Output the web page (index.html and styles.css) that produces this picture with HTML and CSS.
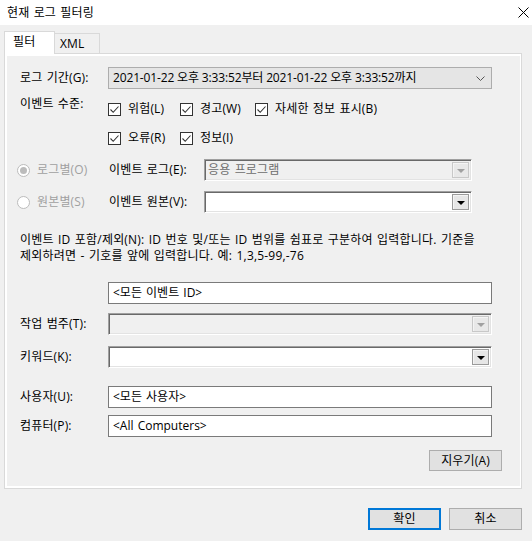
FILE: index.html
```html
<!DOCTYPE html>
<html lang="ko">
<head>
<meta charset="utf-8">
<link rel="stylesheet" href="styles.css">
</head>
<body>
<div class="titlebar">
  <span class="title">현재 로그 필터링</span>
  <svg class="close" width="11" height="11" viewBox="0 0 11 11"><path d="M0.5 0.5 L10.5 10.5 M10.5 0.5 L0.5 10.5" stroke="#000" stroke-width="1" fill="none"/></svg>
</div>
<div class="tabs">
  <div class="tab active">필터</div>
  <div class="tab">XML</div>
</div>
<div class="tabctl">
  <div class="page">
    <div class="row row-period">
      <div class="lbl">로그 기간(G):</div>
      <div class="combo-modern">
        <span class="date">2021-01-22 오후 3:33:52부터 2021-01-22 오후 3:33:52까지</span>
        <svg class="chev" width="9" height="5" viewBox="0 0 9 5"><path d="M0.5 0.5 L4.5 4.5 L8.5 0.5" stroke="#555" fill="none"/></svg>
      </div>
    </div>

    <div class="levels">
      <div class="lbl lbl-levels">이벤트 수준:</div>
      <div class="checks">
        <div class="checkrow">
          <label class="cb w1"><span class="box"><svg width="11" height="11" viewBox="0 0 11 11"><path d="M1.5 5.5 L4.2 8.3 L9.5 2.5" stroke="#333" stroke-width="1.1" fill="none"/></svg></span>위험(L)</label>
          <label class="cb w2"><span class="box"><svg width="11" height="11" viewBox="0 0 11 11"><path d="M1.5 5.5 L4.2 8.3 L9.5 2.5" stroke="#333" stroke-width="1.1" fill="none"/></svg></span>경고(W)</label>
          <label class="cb"><span class="box"><svg width="11" height="11" viewBox="0 0 11 11"><path d="M1.5 5.5 L4.2 8.3 L9.5 2.5" stroke="#333" stroke-width="1.1" fill="none"/></svg></span>자세한 정보 표시(B)</label>
        </div>
        <div class="checkrow second">
          <label class="cb w1"><span class="box"><svg width="11" height="11" viewBox="0 0 11 11"><path d="M1.5 5.5 L4.2 8.3 L9.5 2.5" stroke="#333" stroke-width="1.1" fill="none"/></svg></span>오류(R)</label>
          <label class="cb w2"><span class="box"><svg width="11" height="11" viewBox="0 0 11 11"><path d="M1.5 5.5 L4.2 8.3 L9.5 2.5" stroke="#333" stroke-width="1.1" fill="none"/></svg></span>정보(I)</label>
        </div>
      </div>
    </div>

    <div class="row row-radio1">
      <div class="radio-item"><span class="radio checked"></span><span class="dis">로그별(O)</span></div>
      <div class="lbl2">이벤트 로그(E):</div>
      <div class="combo3d short disabled">
        <span class="val">응용 프로그램</span>
        <span class="dbtn"><span class="tri"></span></span>
      </div>
    </div>

    <div class="row row-radio2">
      <div class="radio-item"><span class="radio"></span><span class="dis">원본별(S)</span></div>
      <div class="lbl2">이벤트 원본(V):</div>
      <div class="combo3d short">
        <span class="val"></span>
        <span class="dbtn"><span class="tri"></span></span>
      </div>
    </div>

    <p class="desc">이벤트 ID 포함/제외(N): ID 번호 및/또는 ID 범위를 쉼표로 구분하여 입력합니다. 기준을<br>제외하려면 - 기호를 앞에 입력합니다. 예: 1,3,5-99,-76</p>

    <div class="row row-id">
      <div class="lbl"></div>
      <div class="input">&lt;모든 이벤트 ID&gt;</div>
    </div>

    <div class="row row-task">
      <div class="lbl">작업 범주(T):</div>
      <div class="combo3d wide disabled">
        <span class="val"></span>
        <span class="dbtn"><span class="tri"></span></span>
      </div>
    </div>

    <div class="row row-kw">
      <div class="lbl">키워드(K):</div>
      <div class="combo3d wide">
        <span class="val"></span>
        <span class="dbtn"><span class="tri"></span></span>
      </div>
    </div>

    <div class="row row-user">
      <div class="lbl">사용자(U):</div>
      <div class="input">&lt;모든 사용자&gt;</div>
    </div>

    <div class="row row-comp">
      <div class="lbl">컴퓨터(P):</div>
      <div class="input">&lt;All Computers&gt;</div>
    </div>

    <div class="clear-row">
      <button class="btn">지우기(A)</button>
    </div>
  </div>
</div>
<div class="footer">
  <button class="btn primary">확인</button>
  <button class="btn">취소</button>
</div>
</body>
</html>
```

FILE: styles.css
```css
* { box-sizing: border-box; }
html, body { margin: 0; padding: 0; }
body {
  width: 532px;
  height: 541px;
  background: #f0f0f0;
  font-family: "Open Sans", "Noto Sans CJK KR", sans-serif;
  font-size: 12px;
  letter-spacing: 0.15px;
  word-spacing: 1px;
  color: #000;
  overflow: hidden;
}
.titlebar {
  height: 25px;
  background: #fff;
  display: flex;
  align-items: center;
  justify-content: space-between;
  padding: 0 3px 0 7px;
}
.title { font-size: 12px; line-height: 16px; }
.close { display: block; }

.tabs {
  margin-top: 6px;
  padding-left: 4px;
  display: flex;
  align-items: flex-end;
  height: 22px;
  position: relative;
  z-index: 1;
}
.tab {
  height: 20px;
  width: 45px;
  border: 1px solid #d9d9d9;
  border-bottom: none;
  border-left: none;
  background: #f0f0f0;
  padding-left: 5px;
  line-height: 19px;
}
.tab.active {
  width: 51px;
  height: 23px;
  margin-bottom: -1px;
  background: #fff;
  border-left: 1px solid #d9d9d9;
  padding-left: 8px;
  line-height: 20px;
}
.tabctl {
  margin-left: 4px;
  width: 518px;
  height: 436px;
  border: 1px solid #d9d9d9;
  background: #fff;
  padding: 2px 1px 2px 2px;
}
.page {
  background: #f0f0f0;
  height: 100%;
  padding: 11px 0 0 10px;
}
.row {
  display: flex;
  align-items: center;
  height: 22px;
}
.lbl {
  width: 91px;
  padding-left: 3px;
  flex: none;
  line-height: 16px;
}
.combo-modern {
  width: 384px;
  height: 22px;
  border: 1px solid #adadad;
  background: #e5e5e5;
  display: flex;
  align-items: center;
  justify-content: space-between;
  padding: 0 6px 0 4px;
  line-height: 16px;
}
.date { letter-spacing: -0.15px; word-spacing: 0; }
.chev { display: block; }

.levels {
  margin-top: 7px;
  display: flex;
}
.lbl-levels { height: 16px; }
.checks { padding-top: 5px; }
.checkrow { display: flex; height: 16px; align-items: center; }
.checkrow.second { margin-top: 13px; }
.cb {
  display: flex;
  align-items: center;
  line-height: 16px;
}
.cb.w1 { width: 72px; }
.cb.w2 { width: 75px; }
.box {
  width: 13px;
  height: 13px;
  border: 1px solid #333;
  background: #fff;
  margin-right: 7px;
  display: flex;
  align-items: center;
  justify-content: center;
  flex: none;
}
.box svg { display: block; }

.row-radio1 { margin-top: 13px; }
.row-radio2 { margin-top: 10px; }
.radio-item {
  width: 92px;
  display: flex;
  align-items: center;
  flex: none;
}
.radio {
  width: 13px;
  height: 13px;
  border-radius: 50%;
  border: 1px solid #bcbcbc;
  background: #fff;
  margin-right: 7px;
  display: flex;
  align-items: center;
  justify-content: center;
  flex: none;
}
.radio.checked::after {
  content: "";
  width: 7px;
  height: 7px;
  border-radius: 50%;
  background: #bcbcbc;
}
.dis { color: #a0a0a0; line-height: 16px; }
.lbl2 { width: 95px; flex: none; line-height: 16px; }

.combo3d {
  height: 22px;
  display: flex;
  align-items: center;
  justify-content: space-between;
  border: 1px solid;
  border-color: #a0a0a0 #fff #fff #a0a0a0;
  box-shadow: inset 1px 1px 0 #696969, inset -1px -1px 0 #e3e3e3;
  background: #fff;
  padding: 2px;
}
.combo3d.short { width: 268px; }
.combo3d.wide { width: 384px; }
.combo3d.disabled { background: #f0f0f0; }
.combo3d .val { padding-left: 1px; color: #6d6d6d; line-height: 16px; }
.dbtn {
  width: 17px;
  height: 16px;
  border: 1px solid #9a9a9a;
  background: #e6e6e6;
  display: flex;
  align-items: center;
  justify-content: center;
  box-shadow: inset 1px 1px 0 #f4f4f4;
}
.tri {
  width: 0;
  height: 0;
  border-left: 4px solid transparent;
  border-right: 4px solid transparent;
  border-top: 4px solid #000;
  margin-top: 2px;
}
.disabled .dbtn { border-color: #c8c8c8; background: #e8e8e8; }
.disabled .tri { border-top-color: #a0a0a0; }

.desc {
  margin: 19px 0 0 3px;
  line-height: 16px;
  letter-spacing: 0.2px;
  white-space: nowrap;
}
.input {
  width: 384px;
  height: 22px;
  border: 1px solid #7a7a7a;
  background: #fff;
  padding: 0 4px;
  line-height: 20px;
  letter-spacing: 0;
}
.row-id { margin-top: 18px; }
.row-task { margin-top: 9px; }
.row-kw { margin-top: 11px; }
.row-user { margin-top: 18px; }
.row-comp { margin-top: 7px; }

.clear-row {
  margin-top: 13px;
  display: flex;
  justify-content: flex-end;
  padding-right: 18px;
}
.btn {
  width: 73px;
  height: 21px;
  border: 1px solid #adadad;
  background: #e1e1e1;
  font-family: inherit;
  font-size: 12px;
  letter-spacing: inherit;
  padding: 0;
  color: #000;
  line-height: 16px;
}
.footer {
  margin-top: 19px;
  display: flex;
  justify-content: flex-end;
  gap: 8px;
  padding-right: 10px;
}
.footer .btn { height: 22px; }
.btn.primary { border: 2px solid #0078d7; }
```
